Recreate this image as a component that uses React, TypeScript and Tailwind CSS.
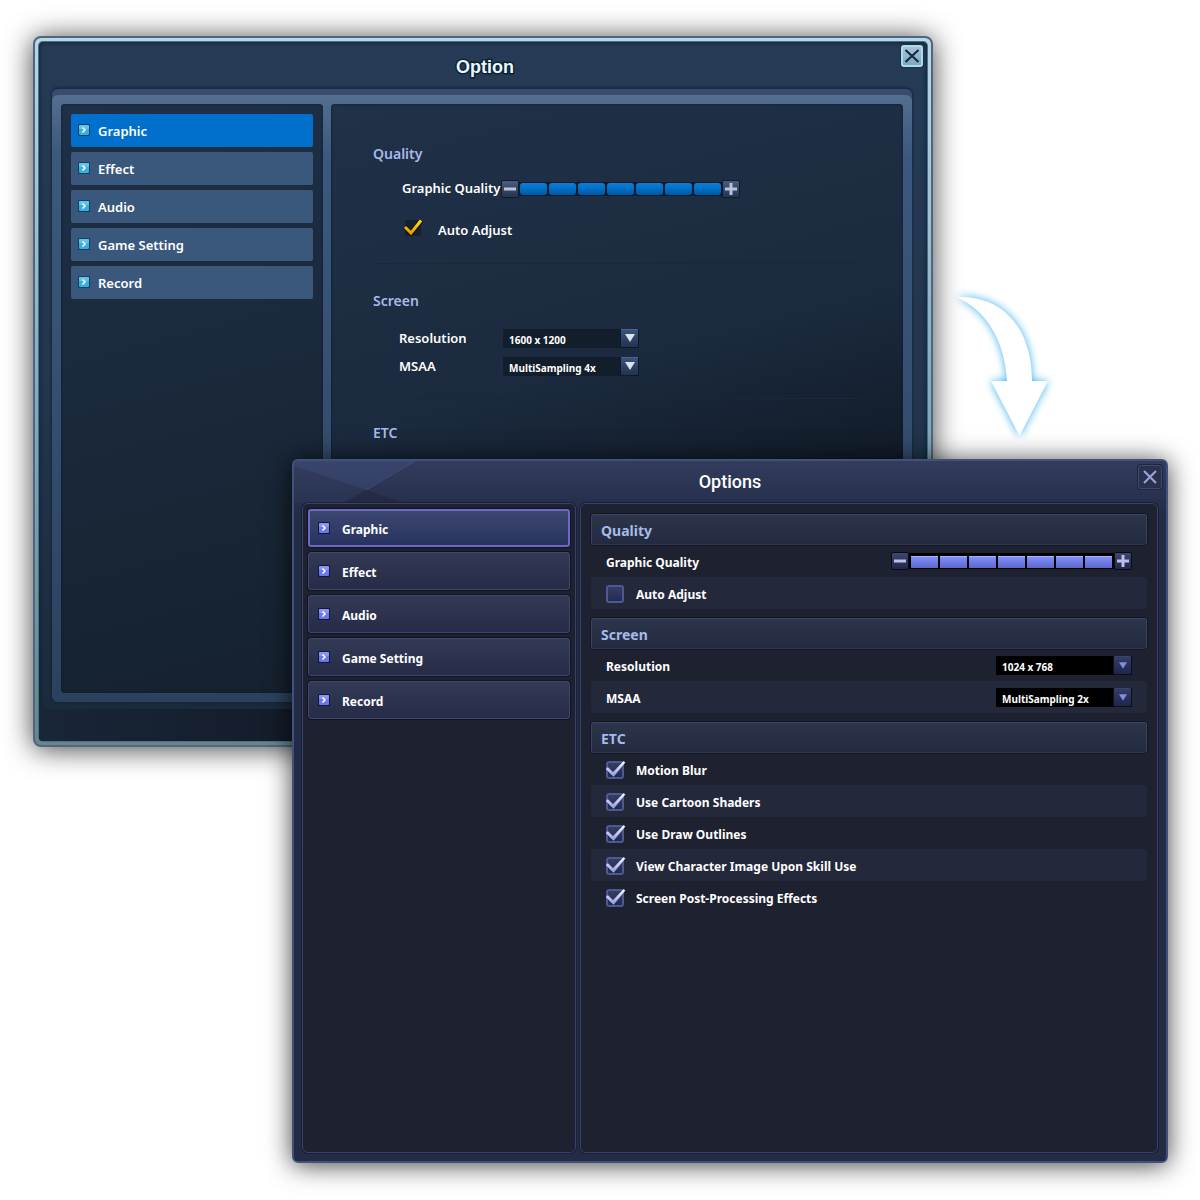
import { useId, useState } from "react"
import clsx from "clsx"

type Theme = "classic" | "modern"

type Choice = {
  label: string
  options: string[]
}

const menu = ["Graphic", "Effect", "Audio", "Game Setting", "Record"]

const classicChoices: Choice[] = [
  { label: "Resolution", options: ["1600 x 1200", "1280 x 1024", "1024 x 768"] },
  { label: "MSAA", options: ["MultiSampling 4x", "MultiSampling 2x"] },
]

const modernChoices: Choice[] = [
  { label: "Resolution", options: ["1024 x 768", "1280 x 1024", "1600 x 1200"] },
  { label: "MSAA", options: ["MultiSampling 2x", "MultiSampling 4x"] },
]

const effects = [
  "Motion Blur",
  "Use Cartoon Shaders",
  "Use Draw Outlines",
  "View Character Image Upon Skill Use",
  "Screen Post-Processing Effects",
]

const Bullet = ({ theme }: { theme: Theme }) => (
  <svg viewBox="0 0 12 12" className="size-3 shrink-0 mb-1" aria-hidden="true">
    <rect width="12" height="12" rx="1" className={theme === "classic" ? "fill-[#17405f]" : "fill-[#141833]"} />
    <rect x="1" y="1" width="10" height="10" rx="1" className={theme === "classic" ? "fill-[#35b0e2]" : "fill-[#6878ee]"} />
    <rect x="1" y="1" width="10" height="4" rx="1" className={theme === "classic" ? "fill-[#62c4ec]" : "fill-[#8b94f6]"} />
    <path d="M4.5 3.5 7 6 4.5 8.5" fill="none" stroke="#fff" strokeWidth="1.6" />
  </svg>
)

const Menu = ({ theme }: { theme: Theme }) => {
  const [active, setActive] = useState("Graphic")

  return (
    <nav className="flex flex-col gap-[5px]">
      {menu.map((item) => (
        <button
          key={item}
          type="button"
          onClick={() => setActive(item)}
          className={clsx(
            "flex items-center text-left text-white",
            theme === "classic" && "h-[33px] gap-2 rounded-xs px-[7px] pt-[2px] text-[13px] font-semibold",
            theme === "classic" && (item === active ? "bg-[#0070cc]" : "bg-[#3a587c]"),
            theme === "modern" && "h-[38px] gap-3 rounded-[3px] pt-1 text-xs font-bold shadow-[0_0_0_1px_#12141f]",
            theme === "modern" &&
              (item === active
                ? "border-2 border-[#6a69c6] bg-linear-to-b from-[#3d4871] to-[#28325f] px-2"
                : "border border-[#3f486c] bg-linear-to-b from-[#333a56] to-[#262c47] px-[9px]"),
          )}
        >
          <Bullet theme={theme} />
          {item}
        </button>
      ))}
    </nav>
  )
}

const StepButton = ({ theme, sign, onClick }: { theme: Theme; sign: "minus" | "plus"; onClick: () => void }) => (
  <button
    type="button"
    aria-label={sign === "minus" ? "Lower quality" : "Raise quality"}
    onClick={onClick}
    className={clsx(
      "flex size-[18px] items-center justify-center rounded-xs border",
      theme === "classic"
        ? "border-[#101a28] bg-linear-to-b from-[#4b5d7c] to-[#253550]"
        : "border-[#090b14] bg-linear-to-b from-[#3d4770] to-[#1f2749]",
    )}
  >
    <svg viewBox="0 0 12 12" className="size-3 shrink-0" aria-hidden="true">
      <path
        d={sign === "minus" ? "M0 6h12" : "M0 6h12M6 0v12"}
        fill="none"
        stroke={theme === "classic" ? "#b4c4dc" : "#bcc0e6"}
        strokeWidth="3"
      />
    </svg>
  </button>
)

const QualitySlider = ({ theme, id }: { theme: Theme; id: string }) => {
  const [level, setLevel] = useState(7)

  return (
    <div className="flex items-center">
      <StepButton theme={theme} sign="minus" onClick={() => setLevel(Math.max(0, level - 1))} />
      <div
        className={clsx(
          "relative flex items-center gap-[2px] focus-within:outline",
          theme === "classic" ? "h-[14px] bg-[#0c1b2e] px-px" : "h-4 bg-black px-[2px] pt-px",
        )}
      >
        {[1, 2, 3, 4, 5, 6, 7].map((step) => (
          <span
            key={step}
            className={clsx(
              "h-3 w-[27px]",
              step > level && "invisible",
              theme === "classic"
                ? "rounded-[3px] bg-linear-to-b from-[#0782dc] to-[#0058a6]"
                : "border-t border-[#a9b0fc] bg-linear-to-b from-[#8190fa] to-[#5a68c8]",
            )}
          />
        ))}
        <input
          id={id}
          type="range"
          min={0}
          max={7}
          value={level}
          onChange={(e) => setLevel(Number(e.target.value))}
          className="absolute inset-0 w-full cursor-pointer opacity-0"
        />
      </div>
      <StepButton theme={theme} sign="plus" onClick={() => setLevel(Math.min(7, level + 1))} />
    </div>
  )
}

const Select = ({ theme, id, options }: { theme: Theme; id: string; options: string[] }) => (
  <div className="relative flex w-34">
    <select
      id={id}
      className={clsx(
        "h-[19px] w-full appearance-none px-1.5 pt-[3px] text-[10px]/[16px] font-bold text-white",
        theme === "classic" ? "bg-[#131e2c]" : "bg-black",
      )}
    >
      {options.map((option) => (
        <option key={option}>{option}</option>
      ))}
    </select>
    <span
      className={clsx(
        "pointer-events-none absolute inset-y-0 right-0 flex w-[19px] items-center justify-center rounded-xs border",
        theme === "classic"
          ? "border-[#0f1926] border-t-[#4a6690] bg-linear-to-b from-[#38547c] to-[#22334f]"
          : "border-[#0c0f1e] border-t-[#3b4470] bg-linear-to-b from-[#323c66] to-[#1f2748]",
      )}
    >
      <svg
        viewBox="0 0 10 8"
        className={clsx(theme === "classic" ? "h-2 w-[10px] fill-[#dde1e8]" : "h-[7px] w-2 fill-[#838de0]")}
        aria-hidden="true"
      >
        <path d="M0 0h10L5 8z" />
      </svg>
    </span>
  </div>
)

const Checkbox = ({ theme, label, checked }: { theme: Theme; label: string; checked?: boolean }) => (
  <label
    className={clsx(
      "flex cursor-pointer items-center pt-1 text-white",
      theme === "classic" ? "gap-4 text-[13px] font-semibold" : "gap-3 text-xs font-bold",
    )}
  >
    <span className="relative mb-[3px] size-[18px]">
      <input
        type="checkbox"
        defaultChecked={checked}
        className={clsx(
          "peer block appearance-none",
          theme === "classic"
            ? "mx-px size-4 rounded-xs bg-[#142030]"
            : "size-[18px] rounded-[3px] border-2 border-[#4e5891] bg-linear-to-b from-[#363e66] to-[#232b50]",
        )}
      />
      <svg
        viewBox="0 0 20 18"
        className="pointer-events-none invisible absolute inset-0 h-[18px] w-5 overflow-visible peer-checked:visible"
        aria-hidden="true"
      >
        <defs>
          <linearGradient id="goldTick" x1="0" y1="0" x2="0" y2="1">
            <stop offset="0" stopColor="#ffe000" />
            <stop offset="1" stopColor="#f09a00" />
          </linearGradient>
          <linearGradient id="silverTick" x1="0" y1="0" x2="0" y2="1">
            <stop offset="0" stopColor="#fff" />
            <stop offset="1" stopColor="#8f98e0" />
          </linearGradient>
        </defs>
        {theme === "classic" ? (
          <>
            <path d="M1 7 7 13.500 17 1" fill="none" stroke="#0d1622" strokeWidth="5" />
            <path d="M1 7 7 13 17 .5" fill="none" stroke="url(#goldTick)" strokeWidth="3" />
          </>
        ) : (
          <path
            d="M0 8 2 6.500 7 11.500 17.500.5 19 1.500 7.500 15.500z"
            fill="url(#silverTick)"
            stroke="url(#silverTick)"
            strokeWidth=".6"
          />
        )}
      </svg>
    </span>
    {label}
  </label>
)

const ClassicWindow = () => {
  const id = useId()

  return (
    <section className="ml-[33px] w-3/4 rounded-lg bg-[#4c6784] p-[2px] shadow-[0_2px_28px_rgba(0,0,0,0.75)]">
      <div className="rounded-md bg-linear-to-b from-[#bbd6e4] via-[#88aabc] to-[#6c8584] p-1">
        <div className="rounded-sm bg-linear-to-b from-[#263b55] via-[#22364d] to-[#182a3a] shadow-[inset_0_0_5px_#101c2b,0_0_0_1px_#3f7394]">
          <header className="relative flex h-[46px] items-center justify-center pt-1 pl-1">
            <h1 className="font-['Liberation_Sans',sans-serif] text-lg font-bold text-[#e6f8ff] [paint-order:stroke_fill] [-webkit-text-stroke:3px_#0e2233]">
              Option
            </h1>
            <button
              type="button"
              aria-label="Close"
              className="absolute top-[3px] right-1 size-[22px] rounded-[3px] border-2 border-[#a9dcec] bg-linear-to-b from-[#a8c4d4] to-[#7fa8bf] shadow-[0_0_2px_#0c1a28]"
            >
              <svg viewBox="0 0 18 18" className="size-[18px]" aria-hidden="true">
                <path d="M2.500 3 15.500 15M15.500 3 2.500 15" fill="none" stroke="#0f2c42" strokeWidth="2.200" />
              </svg>
            </button>
          </header>

          <div className="mr-[15px] ml-[13px] rounded-t-md rounded-b-lg border-t border-[#1a2b40] bg-[#384c6d] pt-1.5 shadow-[0_0_3px_#0d1a29]">
            <div className="grid grid-cols-[262px_1fr] gap-2 rounded-md bg-linear-to-b from-[#536e8f] via-[#3b597f] via-10% to-[#2b425f] p-[9px]">
              <div className="rounded-sm bg-linear-165 from-[#1f3047] to-[#15212e] p-[10px] shadow-[inset_0_0_3px_#101c2c]">
                <Menu theme="classic" />
              </div>

              <div className="min-h-[589px] rounded-sm bg-linear-165 from-[#203148] via-[#1b2a3e] via-45% to-[#0d141e] to-80% px-[42px] pt-10 text-[13px] font-semibold text-white shadow-[inset_0_0_3px_#101c2c]">
                <h2 className="text-sm/[20px] text-[#a9b8ea]">Quality</h2>
                <div className="mt-[11px] ml-[29px] flex h-7 items-center">
                  <label htmlFor={`${id}-quality`} className="w-[99px] whitespace-nowrap">
                    Graphic Quality
                  </label>
                  <QualitySlider theme="classic" id={`${id}-quality`} />
                </div>
                <div className="mt-[13px] ml-[31px] h-7">
                  <Checkbox theme="classic" label="Auto Adjust" checked />
                </div>
                <hr className="mt-[19px] border-[#1a283b]" />

                <h2 className="mt-[27px] text-sm/[20px] text-[#a9b8ea]">Screen</h2>
                <div className="mt-[13px] ml-[26px]">
                  {classicChoices.map(({ label, options }) => (
                    <div key={label} className="flex h-7 items-center">
                      <label htmlFor={`${id}-${label}`} className="w-[104px] pt-[2px]">
                        {label}
                      </label>
                      <Select theme="classic" id={`${id}-${label}`} options={options} />
                    </div>
                  ))}
                </div>
                <hr className="mt-[18px] border-[#1a283b]" />

                <h2 className="mt-6 text-sm/[20px] text-[#a9b8ea]">ETC</h2>
              </div>
            </div>
          </div>

          <footer className="mt-[7px] h-8 rounded-b-sm bg-linear-to-r from-[#192638] via-[#111824] via-40% to-[#0c101b]" />
        </div>
      </div>
    </section>
  )
}

const SectionTitle = ({ children }: { children: string }) => (
  <h2 className="flex h-[31px] items-center rounded-[3px] border border-[#39445f] border-b-[#2d3650] bg-linear-to-b from-[#2d354c] to-[#232b40] px-[9px] pt-[3px] text-sm font-bold text-[#a6bae8] shadow-[0_0_0_1px_#151824]">
    {children}
  </h2>
)

const rowStyle =
  "flex h-8 items-center justify-between rounded-xs px-[15px] text-xs font-bold text-white even:bg-[#24283b]"

const ModernWindow = () => {
  const id = useId()

  return (
    <section className="relative -mt-[288px] mr-8 ml-auto w-[73%] rounded-md border-2 border-[#42517a] bg-linear-to-b from-[#333c5d] via-[#222c47] via-8% to-[#242c45] px-2 pb-2 shadow-[0_2px_26px_rgba(0,0,0,0.75)]">
      <svg
        viewBox="0 0 130 42"
        className="pointer-events-none absolute top-0 left-0 h-[42px] w-[130px]"
        aria-hidden="true"
      >
        <path d="M0 0h121L72 29 0 5z" fill="#46558a" fillOpacity=".35" />
        <path d="M72 29 50 42h61z" fill="#1f2338" fillOpacity=".5" />
        <path d="M0 5 72 29 50 42H0z" fill="#3c4a70" fillOpacity=".15" />
        <path d="M121 0 72 29" fill="none" stroke="#465a92" strokeOpacity=".6" />
      </svg>
      <header className="relative flex h-[42px] items-center justify-center">
        <h1 className="font-[Roboto,sans-serif] text-lg font-medium text-white">Options</h1>
        <button
          type="button"
          aria-label="Close"
          className="absolute top-1 -right-1 flex size-6 items-center justify-center rounded-[3px] border border-[#3f4a72] bg-[#29314f] shadow-[0_0_0_1px_#1f2640]"
        >
          <svg viewBox="0 0 14 14" className="size-[14px]" aria-hidden="true">
            <path d="m1 1 12 12M13 1 1 13" fill="none" stroke="#96a3d2" strokeWidth="2.200" />
          </svg>
        </button>
      </header>

      <div className="grid grid-cols-[274px_1fr] gap-1">
        <div className="rounded-md border border-[#36426a] bg-[#1e212f] p-[5px] shadow-[0_0_0_1px_#1a1f35]">
          <Menu theme="modern" />
        </div>

        <div className="flex min-h-[650px] flex-col gap-[9px] rounded-md border border-[#36426a] bg-[#1e212f] p-[10px] shadow-[0_0_0_1px_#1a1f35]">
          <div>
            <SectionTitle>Quality</SectionTitle>
            <div>
              <div className={rowStyle}>
                <label htmlFor={`${id}-quality`} className="pt-[3px]">
                  Graphic Quality
                </label>
                <QualitySlider theme="modern" id={`${id}-quality`} />
              </div>
              <div className={rowStyle}>
                <Checkbox theme="modern" label="Auto Adjust" />
              </div>
            </div>
          </div>

          <div>
            <SectionTitle>Screen</SectionTitle>
            <div>
              {modernChoices.map(({ label, options }) => (
                <div key={label} className={rowStyle}>
                  <label htmlFor={`${id}-${label}`} className="pt-[3px]">
                    {label}
                  </label>
                  <Select theme="modern" id={`${id}-${label}`} options={options} />
                </div>
              ))}
            </div>
          </div>

          <div>
            <SectionTitle>ETC</SectionTitle>
            <div>
              {effects.map((effect) => (
                <div key={effect} className={rowStyle}>
                  <Checkbox theme="modern" label={effect} checked />
                </div>
              ))}
            </div>
          </div>
        </div>
      </div>
    </section>
  )
}

export default function App() {
  return (
    <main className="relative flow-root bg-white pt-9 pb-[37px] font-['Noto_Sans',sans-serif]">
      <ClassicWindow />
      <svg
        viewBox="948 286 110 160"
        className="absolute top-[286px] left-[79%] h-40 w-[110px] overflow-visible drop-shadow-[0_0_4px_#38b0f0]"
        aria-hidden="true"
      >
        <path d="M957 297C1006 295 1032 332 1032 381H1048L1019.500 436 991 381H1007C1005 345 990 313 957 297z" fill="#fff" />
      </svg>
      <ModernWindow />
    </main>
  )
}
